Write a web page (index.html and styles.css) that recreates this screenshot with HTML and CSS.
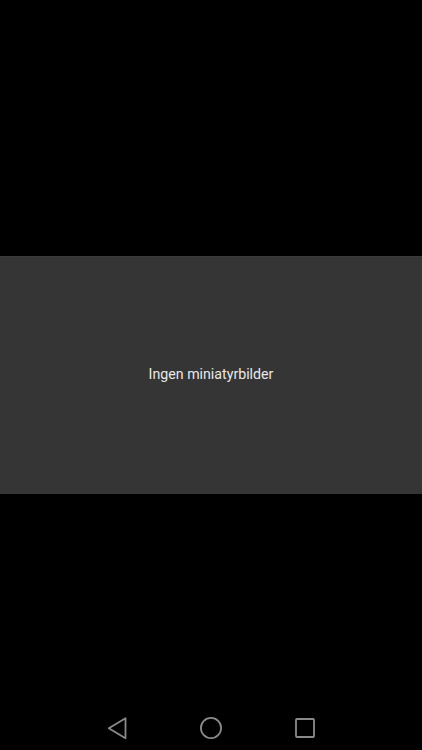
FILE: index.html
```html
<!DOCTYPE html>
<html>
<head>
<meta charset="utf-8">
<link rel="stylesheet" href="styles.css">
</head>
<body>
<div class="screen">
  <div class="top"></div>
  <div class="panel"><span class="msg">Ingen miniatyrbilder</span></div>
  <div class="bottom"></div>
  <div class="nav">
    <svg class="ico" width="24" height="24" viewBox="0 0 24 24"><path d="M20.5 2.2 L3.8 12.2 L20.5 22.2 Z" fill="none" stroke="#8a8a8a" stroke-width="1.8" stroke-linejoin="round"/></svg>
    <svg class="ico" width="24" height="24" viewBox="0 0 24 24"><circle cx="12" cy="12" r="10.1" fill="none" stroke="#8a8a8a" stroke-width="1.8"/></svg>
    <svg class="ico" width="24" height="24" viewBox="0 0 24 24"><rect x="3" y="3" width="18" height="18" rx="1" fill="none" stroke="#8a8a8a" stroke-width="1.8"/></svg>
  </div>
</div>
</body>
</html>
```
FILE: styles.css
```css
html, body { margin: 0; padding: 0; background: #000; }
.screen { width: 422px; height: 750px; display: flex; flex-direction: column; background: #000; }
.top { height: 256px; flex: none; }
.panel { height: 238px; flex: none; background: #353535; border-top: 1px solid #3c3c3c; box-sizing: border-box; display: flex; align-items: center; justify-content: center; padding-bottom: 4px; }
.msg { font-family: Roboto, "Noto Sans", sans-serif; font-size: 14.2px; color: #e8e8e8; }
.bottom { flex: 1; }
.nav { height: 48px; flex: none; display: flex; align-items: center; justify-content: center; gap: 70px; padding-top: 4px; box-sizing: border-box; }
.ico { display: block; }
```
